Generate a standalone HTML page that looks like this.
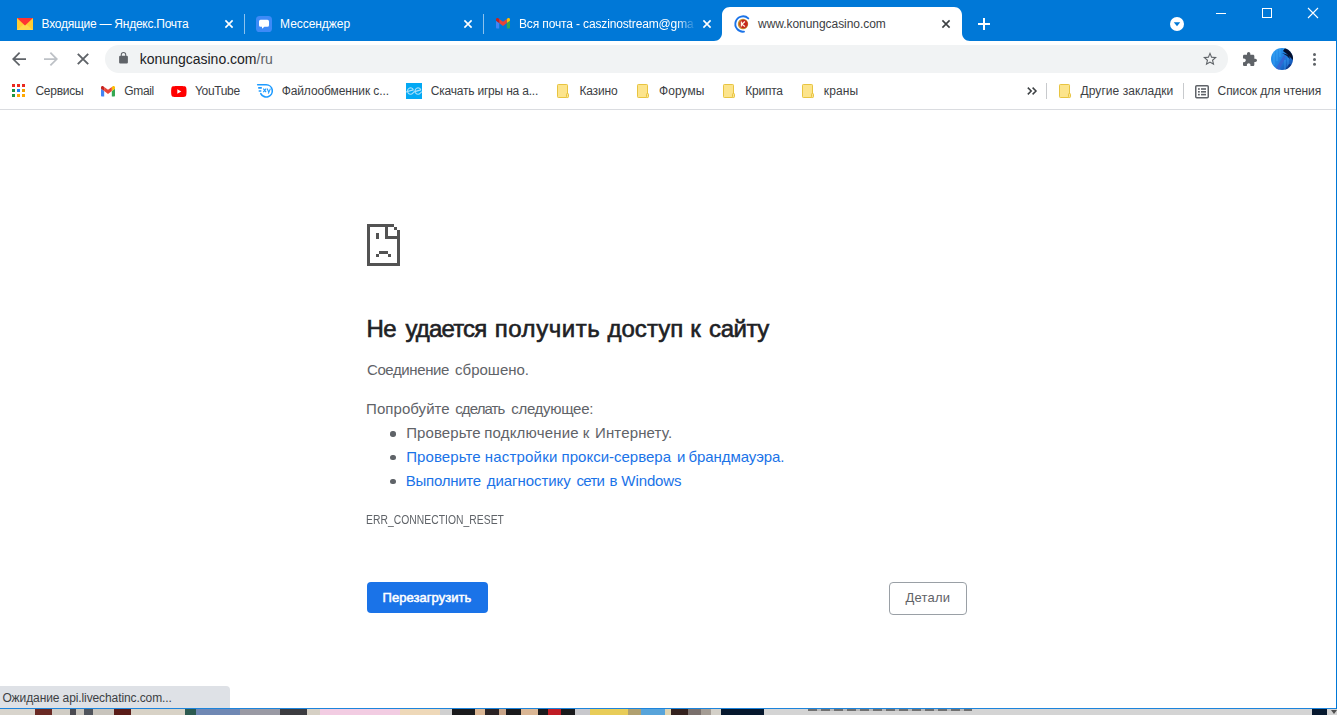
<!DOCTYPE html>
<html><head><meta charset="utf-8">
<style>
*{box-sizing:border-box;margin:0;padding:0}
html,body{width:1337px;height:715px;overflow:hidden;background:#fff;font-family:"Liberation Sans",sans-serif;}
body{position:relative}
.abs,.abs>*{position:absolute}
svg{position:absolute;overflow:visible}
#tabbar{left:0;top:0;width:1337px;height:41px;background:#0078d7}
.tt{top:17px;font-size:12px;color:#fff;white-space:nowrap;line-height:15px}
.sep{top:14px;width:1px;height:20px;background:rgba(255,255,255,.55)}
#t3{letter-spacing:-0.14px}
#acttab{left:714px;top:7px;width:256px;height:34px}
#toolbar{left:0;top:41px;width:1337px;height:36px;background:#fff}
#omni{left:105px;top:4px;width:1123px;height:28px;border-radius:14px;background:#f1f3f4}
#url{left:139px;top:9px;font-size:14px;color:#202124;line-height:18px;white-space:nowrap}
#bm{left:0;top:77px;width:1337px;height:33px;background:#fff;border-bottom:1px solid #dadce0}
.bt{top:7px;font-size:12px;color:#3c4043;white-space:nowrap;line-height:15px}
.bsep{top:6px;width:1px;height:16px;background:#c8cacd}
#page{left:0;top:110px;width:1336px;height:598px;background:#fff}
.h1{top:204px;font-size:24px;font-weight:normal;-webkit-text-stroke:0.6px #202124;color:#202124;white-space:nowrap;line-height:30px}
.p{left:367px;font-size:15px;color:#5f6368;white-space:nowrap;line-height:18px}
.li{left:407px;font-size:15px;color:#5f6368;white-space:nowrap;line-height:18px}
.li.a{color:#1a73e8}
.dot{left:390.3px;width:5.4px;height:5.4px;border-radius:50%;background:#5f6368}
#err{left:367px;top:403px;font-size:12px;color:#5f6368;line-height:14px;white-space:nowrap;transform:scaleX(.86);transform-origin:0 0}
#reload{left:367px;top:472px;width:121px;height:31px;background:#1a73e8;border-radius:4px}
#reloadt{left:383px;top:480px;color:#fff;font-size:13px;-webkit-text-stroke:0.5px #fff;line-height:16px;white-space:nowrap}
#details{left:889px;top:472px;width:78px;height:33px;border:1px solid #9aa0a6;border-radius:4px;background:#fff}
#detailst{left:905px;top:480px;color:#5f6368;font-size:13px;line-height:16px;white-space:nowrap}
#status{left:0;top:686px;width:230px;height:22px;background:#dee1e6;border-radius:0 4px 0 0}
#statust{left:2px;top:5px;font-size:12px;color:#3c4043;line-height:15px;white-space:nowrap}
#rborder{left:1336px;top:41px;width:1px;height:668px;background:#0078d7}
#bline{left:0;top:708px;width:1337px;height:1px;background:#1c84dc}
#bottom{left:0;top:709px;width:1337px;height:6px}
#t1{letter-spacing:-0.250px;margin-left:0.55px}
#t2{letter-spacing:-0.050px;margin-left:0.05px}
#t4{letter-spacing:-0.050px;margin-left:0.05px}
#url{letter-spacing:0.000px;margin-left:0.80px}
#b1{letter-spacing:-0.250px;margin-left:0.45px}
#b2{letter-spacing:-0.350px;margin-left:0.25px}
#b3{letter-spacing:-0.350px;margin-left:0.05px}
#b4{letter-spacing:-0.100px;margin-left:0.65px}
#b5{letter-spacing:-0.200px;margin-left:0.70px}
#b6{letter-spacing:-0.150px;margin-left:0.40px}
#b7{letter-spacing:0.050px;margin-left:0.00px}
#b8{letter-spacing:-0.250px;margin-left:0.35px}
#b9{letter-spacing:0.100px;margin-left:-0.20px}
#b10{letter-spacing:0.050px;margin-left:-0.45px}
#b11{letter-spacing:-0.100px;margin-left:-0.40px}
#h1a{letter-spacing:-0.450px;margin-left:-0.60px}
#h1b{letter-spacing:-0.850px;margin-left:1.45px}
#h1c{letter-spacing:0.550px;margin-left:-0.35px}
#h1d{letter-spacing:0.050px;margin-left:1.40px}
#h1e{letter-spacing:0.000px;margin-left:0.35px}
#h1f{letter-spacing:-0.450px;margin-left:0.10px}
#p1a{letter-spacing:-0.400px;margin-left:1.00px}
#p1b{letter-spacing:0.000px;margin-left:0.10px}
#p2a{letter-spacing:0.050px;margin-left:-0.90px}
#p2b{letter-spacing:-0.900px;margin-left:0.25px}
#p2c{letter-spacing:-0.300px;margin-left:0.25px}
#l1a{letter-spacing:0.100px;margin-left:-0.80px}
#l1b{letter-spacing:0.200px;margin-left:-0.85px}
#l1c{letter-spacing:0.000px;margin-left:-0.25px}
#l1d{letter-spacing:0.150px;margin-left:-1.05px}
#l2a{letter-spacing:0.100px;margin-left:-0.80px}
#l2b{letter-spacing:0.200px;margin-left:-0.30px}
#l2c{letter-spacing:0.000px;margin-left:-0.40px}
#l2d{letter-spacing:0.000px;margin-left:0.90px}
#l2e{letter-spacing:-0.050px;margin-left:-0.60px}
#l3a{letter-spacing:-0.250px;margin-left:-1.25px}
#l3b{letter-spacing:-0.050px;margin-left:0.75px}
#l3c{letter-spacing:-0.700px;margin-left:0.50px}
#l3d{letter-spacing:0.000px;margin-left:-0.60px}
#l3e{letter-spacing:-0.100px;margin-left:0.35px}
#err{letter-spacing:0.050px;margin-left:-1.00px}
#reloadt{letter-spacing:0.050px;margin-left:-0.50px}
#detailst{letter-spacing:0.200px;margin-left:0.55px}
#statust{letter-spacing:-0.100px;margin-left:0.40px}
</style></head><body>
<div id="tabbar" class="abs">
  <!-- tab1 yandex mail -->
  <svg style="left:17px;top:18px" width="16" height="12" viewBox="0 0 16 12"><rect width="16" height="12" fill="#ffcc33"/><path d="M0 12 8 5.500 16 12z" fill="#ffd84d"/><path d="M0 0h16L8 7.500z" fill="#ff3333"/></svg>
  <div class="tt" id="t1" style="left:41px">Входящие — Яндекс.Почта</div>
  <svg style="left:225px;top:20px" width="8" height="8" viewBox="0 0 8 8"><path d="M.4.400 7.600 7.600M7.600.400.400 7.600" stroke="#fff" stroke-width="1.600" fill="none"/></svg>
  <div class="sep" style="left:244px"></div>
  <!-- tab2 messenger -->
  <svg style="left:256px;top:16px" width="16" height="16" viewBox="0 0 16 16"><rect width="16" height="16" rx="3.600" fill="#3d8af7"/><path d="M4.600 3.800h6.800a1.600 1.600 0 0 1 1.600 1.600v3.800a1.600 1.600 0 0 1-1.600 1.600H8.400L6 12.800V10.800H4.600A1.600 1.600 0 0 1 3 9.200V5.400A1.600 1.600 0 0 1 4.600 3.800z" fill="#fff"/></svg>
  <div class="tt" id="t2" style="left:280px">Мессенджер</div>
  <svg style="left:464px;top:20px" width="8" height="8" viewBox="0 0 8 8"><path d="M.4.400 7.600 7.600M7.600.400.400 7.600" stroke="#fff" stroke-width="1.600" fill="none"/></svg>
  <div class="sep" style="left:483px"></div>
  <!-- tab3 gmail -->
  <svg style="left:496px;top:18px" width="14" height="10.500" viewBox="52 42 88 66"><path fill="#4285f4" d="M58 108h14V74L52 59v43c0 3.320 2.690 6 6 6"/><path fill="#34a853" d="M120 108h14c3.320 0 6-2.690 6-6V59l-20 15"/><path fill="#fbbc04" d="M120 48v26l20-15v-8c0-7.420-8.470-11.650-14.400-7.200"/><path fill="#ea4335" d="M72 74V48l24 18 24-18v26L96 92"/><path fill="#c5221f" d="M52 51v8l20 15V48l-5.600-4.200c-5.940-4.450-14.400-.22-14.400 7.200"/></svg>
  <div class="tt" id="t3" style="left:519px;width:177px;overflow:hidden;-webkit-mask-image:linear-gradient(90deg,#000 0,#000 158px,transparent 177px);mask-image:linear-gradient(90deg,#000 0,#000 158px,transparent 177px)">Вся почта - caszinostream@gma</div>
  <svg style="left:703px;top:20px" width="8" height="8" viewBox="0 0 8 8"><path d="M.4.400 7.600 7.600M7.600.400.400 7.600" stroke="#fff" stroke-width="1.600" fill="none"/></svg>
  <!-- active tab -->
  <svg id="acttab" width="256" height="34" viewBox="0 0 256 34"><path d="M0 34C4.500 34 8 30.500 8 26V8C8 3.500 11.500 0 16 0H240C244.500 0 248 3.500 248 8V26C248 30.500 251.500 34 256 34Z" fill="#fff"/></svg>
  <svg style="left:733.5px;top:15px" width="18" height="18" viewBox="-9 -9 18 18"><circle r="5.200" fill="#c8912e"/><circle cx=".5" r="4.200" fill="#c4261d"/><path d="M-1.600-2.500V2.500M1.900-2.500-1.100.300 2 2.500" stroke="#fff4e0" stroke-width="1.300" fill="none"/><path d="M5.300-5.600A7.700 7.700 0 1 0 1 7.650" stroke="#1a73e8" stroke-width="1.900" fill="none" stroke-linecap="round"/></svg>
  <div class="tt" id="t4" style="left:758px;color:#3c4043">www.konungcasino.com</div>
  <svg style="left:942px;top:20px" width="8" height="8" viewBox="0 0 8 8"><path d="M.4.400 7.600 7.600M7.600.400.400 7.600" stroke="#3c4043" stroke-width="1.600" fill="none"/></svg>
  <!-- new tab plus -->
  <svg style="left:978px;top:18px" width="12" height="12" viewBox="0 0 12 12"><path d="M6 0V12M0 6H12" stroke="#fff" stroke-width="2" fill="none"/></svg>
  <!-- tab search -->
  <svg style="left:1170px;top:17px" width="14" height="14" viewBox="0 0 14 14"><circle cx="7" cy="7" r="7" fill="#fff"/><path d="M3.800 5.300h6.400L7 9.300z" fill="#0078d7"/></svg>
  <!-- window controls -->
  <div style="left:1216px;top:13px;width:10px;height:1px;background:#fff"></div>
  <div style="left:1262px;top:8px;width:10px;height:10px;border:1px solid #fff"></div>
  <svg style="left:1308px;top:8px" width="10" height="10" viewBox="0 0 10 10"><path d="M0 0 10 10M10 0 0 10" stroke="#fff" stroke-width="1.100" fill="none"/></svg>
</div>

<div id="toolbar" class="abs">
  <!-- back -->
  <svg style="left:12px;top:11px" width="14" height="14" viewBox="0 0 16 16"><path d="M16 7H3.830l5.590-5.590L8 0 0 8l8 8 1.410-1.410L3.830 9H16z" fill="#5f6368"/></svg>
  <!-- forward -->
  <svg style="left:44px;top:11px" width="14" height="14" viewBox="0 0 16 16"><path d="M0 7h12.170L6.580 1.410 8 0l8 8-8 8-1.410-1.410L12.170 9H0z" fill="#bdc1c6"/></svg>
  <!-- stop -->
  <svg style="left:77px;top:12px" width="12" height="12" viewBox="0 0 12 12"><path d="M.8.800 11.200 11.200M11.200.800.800 11.200" stroke="#5f6368" stroke-width="1.900" fill="none"/></svg>
  <div id="omni"></div>
  <!-- lock -->
  <svg style="left:118.500px;top:11px" width="9" height="11.500" viewBox="0 0 16 21"><path d="M14 7h-1V5A5 5 0 0 0 3 5v2H2a2 2 0 0 0-2 2v10a2 2 0 0 0 2 2h12a2 2 0 0 0 2-2V9a2 2 0 0 0-2-2zM4.900 5a3.100 3.100 0 0 1 6.200 0v2H4.900z" fill="#5f6368"/></svg>
  <div id="url">konungcasino.com<span style="color:#5f6368">/ru</span></div>
  <!-- star -->
  <svg style="left:1203px;top:11px" width="14" height="14" viewBox="2 2 20 20"><path d="M22 9.240l-7.190-.62L12 2 9.190 8.630 2 9.240l5.460 4.730L5.820 21 12 17.270 18.180 21l-1.630-7.030L22 9.240zM12 15.400l-3.760 2.270 1-4.280-3.320-2.880 4.380-.38L12 6.100l1.710 4.040 4.380.38-3.320 2.880 1 4.280L12 15.400z" fill="#5f6368"/></svg>
  <!-- puzzle -->
  <svg style="left:1243px;top:11px" width="14" height="14" viewBox="2 1 21 21"><path d="M20.500 11H19V7c0-1.100-.9-2-2-2h-4V3.500C13 2.120 11.880 1 10.500 1S8 2.120 8 3.500V5H4c-1.100 0-1.990.9-1.990 2v3.800H3.500c1.490 0 2.700 1.210 2.700 2.700s-1.210 2.700-2.700 2.700H2V20c0 1.100.9 2 2 2h3.800v-1.500c0-1.490 1.210-2.700 2.700-2.700 1.490 0 2.700 1.210 2.700 2.700V22H17c1.100 0 2-.9 2-2v-4h1.500c1.380 0 2.500-1.120 2.500-2.500S21.880 11 20.500 11z" fill="#5f6368"/></svg>
  <!-- avatar -->
  <svg style="left:1271px;top:7px" width="22" height="22" viewBox="0 0 22 22"><defs><clipPath id="av"><circle cx="11" cy="11" r="11"/></clipPath><linearGradient id="avg" x1="0" y1="0" x2="1" y2="1"><stop offset="0" stop-color="#2a9cf0"/><stop offset=".55" stop-color="#1f7fe0"/><stop offset="1" stop-color="#0c3c9c"/></linearGradient></defs><g clip-path="url(#av)"><rect width="22" height="22" fill="url(#avg)"/><path d="M12 3 16 6 22 12V0H14z" fill="#06102c"/><path d="M11 5l5 3 3 3-1-4z" fill="#0a1838"/><path d="M4 22 13 7l2 2L8 22z" fill="#3a62d0" opacity=".8"/><path d="M3 3v14M6 1v12M9 0v9M14 12v10M17 10v12" stroke="#4cb4ff" stroke-width="1" opacity=".55"/><path d="M14 22l4-6 4 1v5z" fill="#0a2a70" opacity=".7"/></g></svg>
  <!-- menu dots -->
  <svg style="left:1313px;top:12px" width="3" height="14" viewBox="0 0 3 14"><circle cx="1.500" cy="1.600" r="1.500" fill="#5f6368"/><circle cx="1.500" cy="6.400" r="1.500" fill="#5f6368"/><circle cx="1.500" cy="11.200" r="1.500" fill="#5f6368"/></svg>
</div>

<div id="bm" class="abs">
  <!-- apps -->
  <svg style="left:12px;top:7px" width="13" height="13" viewBox="0 0 13 13"><g fill="#ea2a20"><rect width="3" height="3"/><rect x="5" width="3" height="3"/><rect x="10" width="3" height="3"/></g><rect y="5" width="3" height="3" fill="#1c9444"/><rect x="5" y="5" width="3" height="3" fill="#1a80f8"/><rect x="10" y="5" width="3" height="3" fill="#f0a000"/><rect y="10" width="3" height="3" fill="#1c9444"/><rect x="5" y="10" width="3" height="3" fill="#ffa800"/><rect x="10" y="10" width="3" height="3" fill="#ffa800"/></svg>
  <div class="bt" id="b1" style="left:35px">Сервисы</div>
  <!-- gmail -->
  <svg style="left:101px;top:8.500px" width="14" height="10.500" viewBox="52 42 88 66"><path fill="#4285f4" d="M58 108h14V74L52 59v43c0 3.320 2.690 6 6 6"/><path fill="#34a853" d="M120 108h14c3.320 0 6-2.690 6-6V59l-20 15"/><path fill="#fbbc04" d="M120 48v26l20-15v-8c0-7.420-8.470-11.650-14.400-7.200"/><path fill="#ea4335" d="M72 74V48l24 18 24-18v26L96 92"/><path fill="#c5221f" d="M52 51v8l20 15V48l-5.600-4.200c-5.940-4.450-14.400-.22-14.400 7.200"/></svg>
  <div class="bt" id="b2" style="left:124px">Gmail</div>
  <!-- youtube -->
  <svg style="left:171px;top:8.500px" width="15.700" height="11" viewBox="0 0 28 20"><path fill="#f00" d="M27.400 3.100a3.500 3.500 0 0 0-2.500-2.500C22.700 0 14 0 14 0S5.300 0 3.100.6A3.500 3.500 0 0 0 .6 3.100C0 5.300 0 10 0 10s0 4.700.6 6.900a3.500 3.500 0 0 0 2.500 2.500C5.300 20 14 20 14 20s8.700 0 10.900-.6a3.500 3.500 0 0 0 2.500-2.500C28 14.700 28 10 28 10s0-4.700-.6-6.900z"/><path fill="#fff" d="M11.200 14.300 18.500 10l-7.300-4.300z"/></svg>
  <div class="bt" id="b3" style="left:195px">YouTube</div>
  <!-- fileshare -->
  <svg style="left:256px;top:6px" width="18" height="16" viewBox="0 0 18 16"><g stroke="#1e9bff" fill="none" stroke-width="1.600" stroke-linecap="round"><path d="M1.700 1.800H10.200A6.100 6.100 0 1 1 4.770 10.670"/><path d="M2.800 4.900H5.200"/><path d="M3.300 8H4.700"/></g><g stroke="#1e9bff" fill="none" stroke-width="1.100"><path d="M7.300 5.600 10.100 9.200M10.100 5.600 7.300 9.200"/><path d="M11.100 5.600 12.800 9.200M14.400 5.600 12.300 10.600"/></g></svg>
  <div class="bt" id="b4" style="left:281px">Файлообменник с...</div>
  <!-- ee -->
  <svg style="left:406px;top:6px" width="16" height="16" viewBox="0 0 16 16"><rect width="16" height="16" fill="#03a9f4"/><path d="M0 9 L7.300 6.900 A3 3.200 0 1 0 6.800 10.200 L8 8.900 L14.800 6.900 A3 3.200 0 1 0 14.300 10.200 L16 8.700" stroke="#a8e0fb" stroke-width="1.100" fill="none" stroke-linejoin="round"/></svg>
  <div class="bt" id="b5" style="left:430px">Скачать игры на а...</div>
  <!-- folders -->
  <svg style="left:557px;top:7px" width="12" height="14" viewBox="0 0 12 14"><rect x=".5" y=".5" width="10" height="13" rx=".8" fill="#fce48c" stroke="#e8c440"/><rect x="9.500" y="9.500" width="2" height="4" rx=".8" fill="#fce48c" stroke="#e8c440"/></svg>
  <div class="bt" id="b6" style="left:579px">Казино</div>
  <svg style="left:637px;top:7px" width="12" height="14" viewBox="0 0 12 14"><rect x=".5" y=".5" width="10" height="13" rx=".8" fill="#fce48c" stroke="#e8c440"/><rect x="9.500" y="9.500" width="2" height="4" rx=".8" fill="#fce48c" stroke="#e8c440"/></svg>
  <div class="bt" id="b7" style="left:659px">Форумы</div>
  <svg style="left:723px;top:7px" width="12" height="14" viewBox="0 0 12 14"><rect x=".5" y=".5" width="10" height="13" rx=".8" fill="#fce48c" stroke="#e8c440"/><rect x="9.500" y="9.500" width="2" height="4" rx=".8" fill="#fce48c" stroke="#e8c440"/></svg>
  <div class="bt" id="b8" style="left:745px">Крипта</div>
  <svg style="left:802px;top:7px" width="12" height="14" viewBox="0 0 12 14"><rect x=".5" y=".5" width="10" height="13" rx=".8" fill="#fce48c" stroke="#e8c440"/><rect x="9.500" y="9.500" width="2" height="4" rx=".8" fill="#fce48c" stroke="#e8c440"/></svg>
  <div class="bt" id="b9" style="left:824px">краны</div>
  <!-- overflow chevrons -->
  <svg style="left:1027px;top:10px" width="10" height="8" viewBox="0 0 10 8"><path d="M.8.600 4.200 4 .8 7.400M5.600.600 9 4 5.600 7.400" stroke="#3c4043" stroke-width="1.500" fill="none"/></svg>
  <div class="bsep" style="left:1046px"></div>
  <svg style="left:1059px;top:7px" width="12" height="14" viewBox="0 0 12 14"><rect x=".5" y=".5" width="10" height="13" rx=".8" fill="#fce48c" stroke="#e8c440"/><rect x="9.500" y="9.500" width="2" height="4" rx=".8" fill="#fce48c" stroke="#e8c440"/></svg>
  <div class="bt" id="b10" style="left:1081px">Другие закладки</div>
  <div class="bsep" style="left:1183px"></div>
  <!-- reading list -->
  <svg style="left:1195px;top:7.500px" width="14" height="13.500" viewBox="0 0 14 13.500"><rect x=".75" y=".75" width="12.500" height="12" rx="1" fill="none" stroke="#5f6368" stroke-width="1.500"/><g fill="#5f6368"><rect x="3" y="3.200" width="1.800" height="1.600"/><rect x="3" y="6" width="1.800" height="1.600"/><rect x="3" y="8.800" width="1.800" height="1.600"/><rect x="6" y="3.200" width="5" height="1.600"/><rect x="6" y="6" width="5" height="1.600"/><rect x="6" y="8.800" width="5" height="1.600"/></g></svg>
  <div class="bt" id="b11" style="left:1218px">Список для чтения</div>
</div>

<div id="page" class="abs">
  <svg style="left:367px;top:114px" width="33" height="42" viewBox="0 0 11 14" shape-rendering="crispEdges"><g fill="#535353"><rect width="9" height="1"/><rect width="1" height="14"/><rect y="13" width="11" height="1"/><rect x="10" y="2" width="1" height="12"/><rect x="9" y="1" width="1" height="1"/><rect x="6" y="1" width="1" height="4"/><rect x="6" y="4" width="4" height="1"/><rect x="3" y="3" width="1" height="2"/><rect x="4" y="9" width="3" height="1"/><rect x="3" y="10" width="1" height="1"/><rect x="7" y="10" width="1" height="1"/></g></svg>
  <div class="h1" id="h1a" style="left:367px">Не</div><div class="h1" id="h1b" style="left:404px">удается</div><div class="h1" id="h1c" style="left:495px">получить</div><div class="h1" id="h1d" style="left:606px">доступ</div><div class="h1" id="h1e" style="left:690px">к</div><div class="h1" id="h1f" style="left:709px">сайту</div>
  <div class="p" id="p1a" style="top:251px;left:366px">Соединение</div><div class="p" id="p1b" style="top:251px;left:455px">сброшено.</div>
  <div class="p" id="p2a" style="top:290px;left:367px">Попробуйте</div><div class="p" id="p2b" style="top:290px;left:455px">сделать</div><div class="p" id="p2c" style="top:290px;left:511px">следующее:</div>
  <div class="dot" style="top:321.4px"></div><div class="li" id="l1a" style="top:314px;left:407px">Проверьте</div><div class="li" id="l1b" style="top:314px;left:485px">подключение</div><div class="li" id="l1c" style="top:314px;left:583px">к</div><div class="li" id="l1d" style="top:314px;left:596px">Интернету.</div>
  <div class="dot" style="top:345px"></div><div class="li a" id="l2a" style="top:338px;left:407px">Проверьте</div><div class="li a" id="l2b" style="top:338px;left:485px">настройки</div><div class="li a" id="l2c" style="top:338px;left:562px">прокси-сервера</div><div class="li a" id="l2d" style="top:338px;left:676px">и</div><div class="li a" id="l2e" style="top:338px;left:689px">брандмауэра.</div>
  <div class="dot" style="top:368.6px"></div><div class="li a" id="l3a" style="top:362px;left:407px">Выполните</div><div class="li a" id="l3b" style="top:362px;left:486px">диагностику</div><div class="li a" id="l3c" style="top:362px;left:576px">сети</div><div class="li a" id="l3d" style="top:362px;left:610px">в</div><div class="li a" id="l3e" style="top:362px;left:621px">Windows</div>
  <div id="err">ERR_CONNECTION_RESET</div>
  <div id="reload"></div><div id="reloadt">Перезагрузить</div>
  <div id="details"></div><div id="detailst">Детали</div>
</div>

<div id="bottom" class="abs" style="background:linear-gradient(90deg,#d8d4cc 0 35px,#6a2a24 35px 52px,#d0ccc4 52px 70px,#4a4a50 70px 76px,#c8c4bc 76px 84px,#50545c 84px 93px,#c8c4bc 93px 114px,#5a1c18 114px 131px,#d8d2c6 131px 131px,#d8d2c6 131px 185px,#2c5a50 185px 196px,#7088b4 196px 240px,#9a9aa4 240px 280px,#3c3c40 280px 307px,#d6d0c4 307px 320px,#f2cce2 320px 400px,#eed8b8 400px 440px,#d0d0d0 440px 452px,#1a1a1c 452px 475px,#dab694 475px 485px,#2a2224 485px 499px,#c8a488 499px 506px,#1a1a1c 506px 521px,#dab694 521px 538px,#1a1a1c 538px 548px,#c01c24 548px 561px,#1a1a1c 561px 575px,#c8c8cc 575px 590px,#e8cc58 590px 628px,#b0a070 628px 641px,#58a4da 641px 665px,#e0d4b0 665px 671px,#34221e 671px 688px,#7a706c 688px 701px,#a49c94 701px 711px,#d4d0c8 711px 721px,#06182e 721px 764px,#d4d4d4 764px 1312px,#06182e 1312px 1327px,#d4d4d4 1327px 1337px)"></div>
<div class="abs" style="left:808px;top:709px;width:164px;height:2px;background:repeating-linear-gradient(90deg,rgba(30,30,30,.55) 0 9px,rgba(30,30,30,.15) 9px 13px)"></div>
<div class="abs" style="left:1331px;top:710px;width:0;height:0;border-left:3px solid transparent;border-right:3px solid transparent;border-top:4px solid #505050"></div>
<div id="bline" class="abs"></div>
<div id="rborder" class="abs"></div>
<div id="status" class="abs"><div id="statust">Ожидание api.livechatinc.com...</div></div>

</body></html>
